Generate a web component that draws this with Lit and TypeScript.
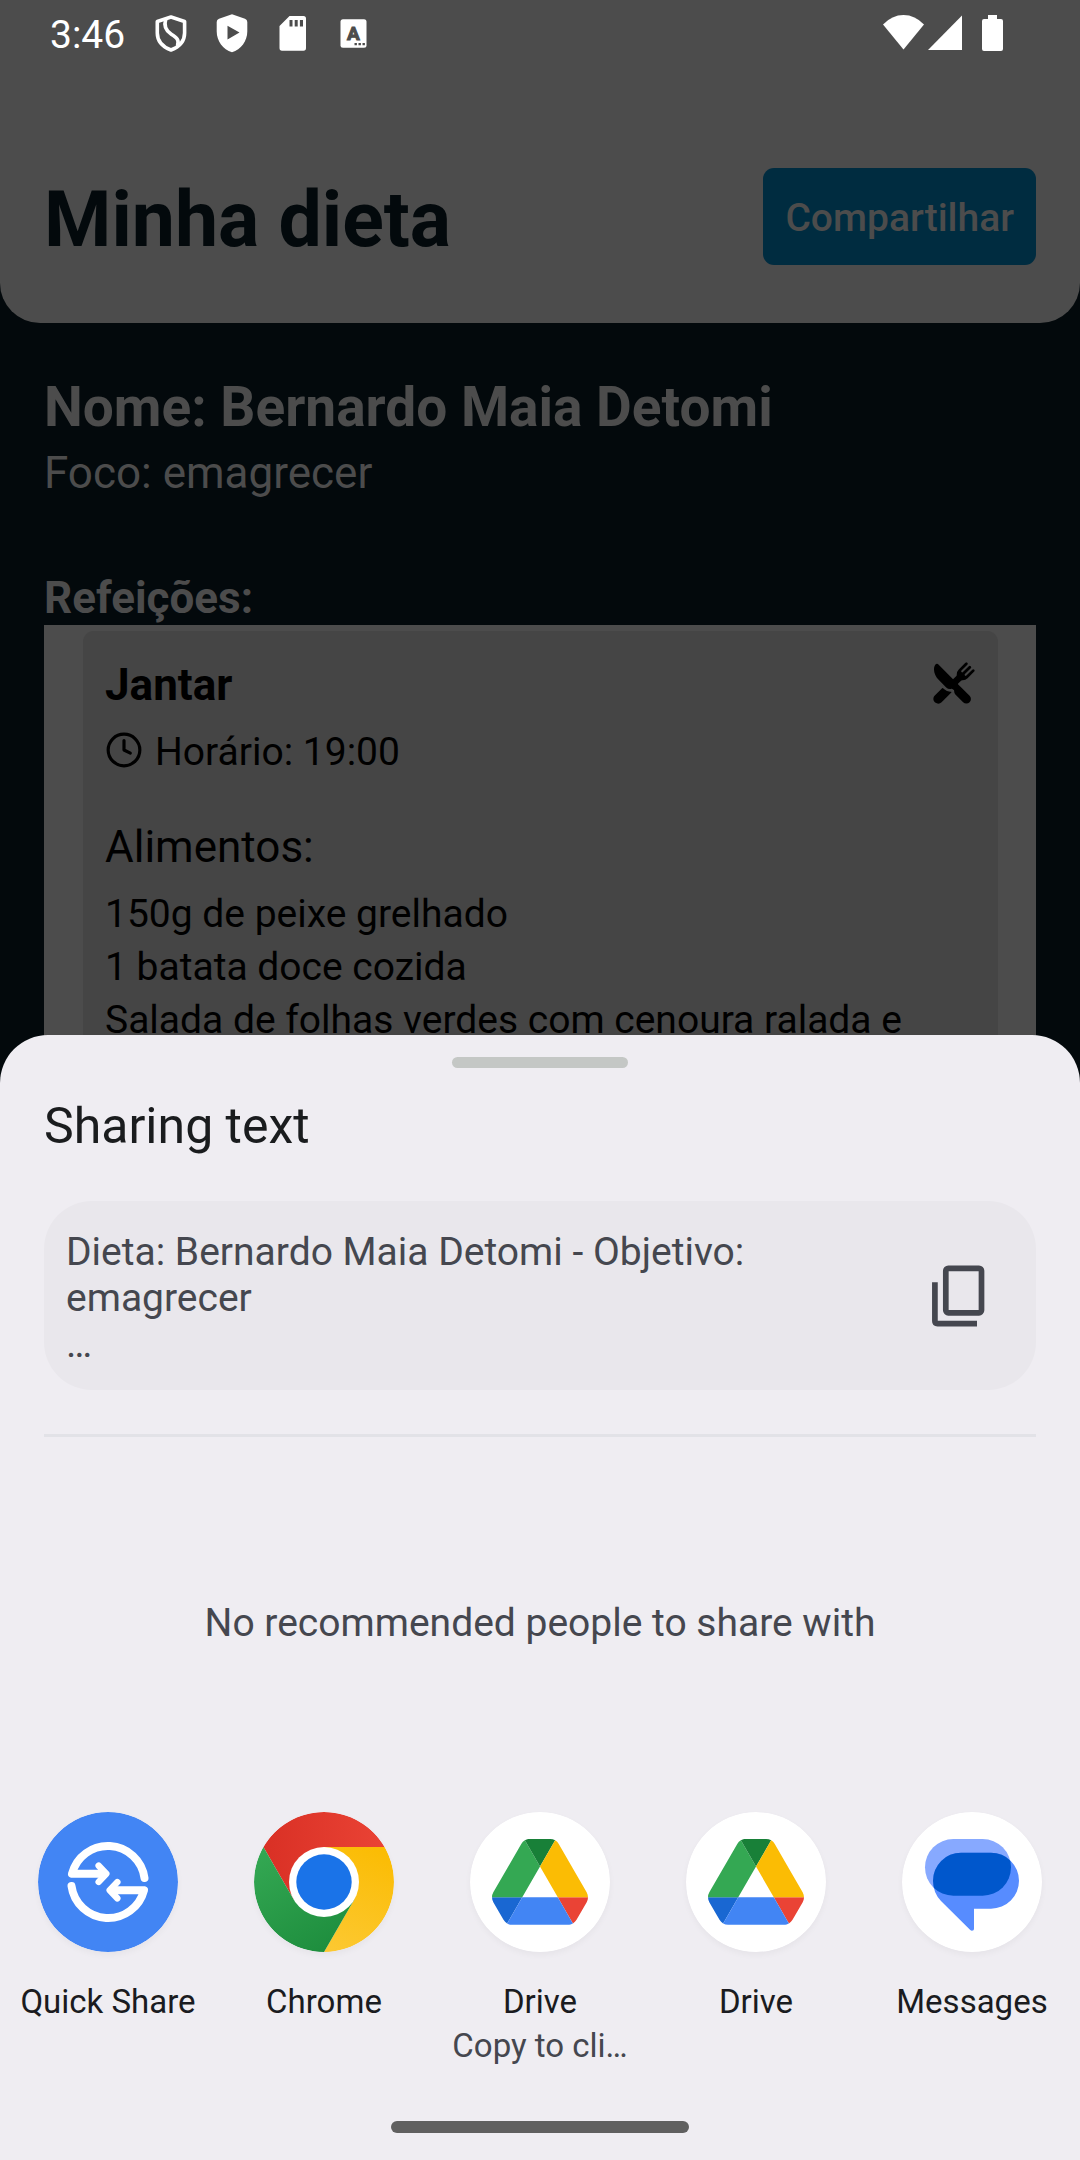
import { LitElement, html, css, svg, nothing } from "lit";
import { customElement } from "lit/decorators.js";

type AppIcon = "quick-share" | "chrome" | "drive" | "messages";

interface ShareTarget {
  icon: AppIcon;
  label: string;
  detail?: string;
}

const targets: ShareTarget[] = [
  { icon: "quick-share", label: "Quick Share" },
  { icon: "chrome", label: "Chrome" },
  { icon: "drive", label: "Drive", detail: "Copy to cli…" },
  { icon: "drive", label: "Drive" },
  { icon: "messages", label: "Messages" },
];

const foods = [
  "150g de peixe grelhado",
  "1 batata doce cozida",
  "Salada de folhas verdes com cenoura ralada e",
];

const artwork = {
  "quick-share": svg`
    <circle cx="70" cy="70" r="70" fill="#4285f4"/>
    <g fill="none" stroke="#fff" stroke-width="8" stroke-linecap="round" stroke-linejoin="round">
      <g>
        <path d="M106.5 66A37 37 0 0 0 34 61.8H66"/>
        <path d="M60.7 53.7l7.6 8.1-7.6 8.1" stroke-width="6.5"/>
      </g>
      <g transform="rotate(180 70 70)">
        <path d="M106.5 66A37 37 0 0 0 34 61.8H66"/>
        <path d="M60.7 53.7l7.6 8.1-7.6 8.1" stroke-width="6.5"/>
      </g>
    </g>`,
  chrome: svg`
    <defs>
      <linearGradient id="red" x1="9" y1="50" x2="131" y2="50" gradientUnits="userSpaceOnUse">
        <stop offset="0" stop-color="#d93025"/><stop offset="1" stop-color="#ea4335"/>
      </linearGradient>
      <linearGradient id="yellow" x1="60" y1="138" x2="105" y2="30" gradientUnits="userSpaceOnUse">
        <stop offset="0" stop-color="#fcc934"/><stop offset="1" stop-color="#fbbc04"/>
      </linearGradient>
      <linearGradient id="green" x1="80" y1="132" x2="20" y2="30" gradientUnits="userSpaceOnUse">
        <stop offset="0" stop-color="#1e8e3e"/><stop offset="1" stop-color="#34a853"/>
      </linearGradient>
    </defs>
    <path fill="url(#red)" d="M9.4 35A70 70 0 0 1 130.6 35H70V70L39.7 87.5Z"/>
    <path fill="url(#yellow)" d="M130.6 35A70 70 0 0 1 70 140L100.3 87.5L70 70V35Z"/>
    <path fill="url(#green)" d="M70 140A70 70 0 0 1 9.4 35L39.7 87.5L70 70L100.3 87.5Z"/>
    <circle cx="70" cy="70" r="35" fill="#fff"/>
    <circle cx="70" cy="70" r="27.7" fill="#1a73e8"/>`,
  drive: svg`
    <circle cx="70" cy="70" r="70" fill="#fff"/>
    <g transform="translate(22 27) scale(1.1)">
      <path fill="#1967d2" d="m6.6 66.85 3.85 6.65c.8 1.4 1.95 2.5 3.3 3.3l13.75-23.8h-27.5c0 1.55.4 3.1 1.2 4.5z"/>
      <path fill="#34a853" d="m43.65 25-13.75-23.8c-1.35.8-2.5 1.9-3.3 3.3l-25.4 44a9.06 9.06 0 0 0-1.2 4.5h27.5z"/>
      <path fill="#ea4335" d="m73.55 76.8c1.35-.8 2.5-1.9 3.3-3.3l1.6-2.75 7.65-13.25c.8-1.4 1.2-2.95 1.2-4.5h-27.5z"/>
      <path fill="#188038" d="m43.65 25 13.75-23.8c-1.35-.8-2.9-1.2-4.5-1.2h-18.5c-1.6 0-3.15.45-4.5 1.2z"/>
      <path fill="#4285f4" d="m59.8 53h-32.3l-13.75 23.8c1.35.8 2.9 1.2 4.5 1.2h50.8c1.6 0 3.15-.45 4.5-1.2z"/>
      <path fill="#fbbc04" d="m73.4 26.5-12.7-22c-.8-1.4-1.95-2.5-3.3-3.3l-13.75 23.8 16.15 28h27.45c0-1.55-.4-3.1-1.2-4.5z"/>
    </g>`,
  messages: svg`
    <defs><clipPath id="pill"><rect x="23" y="27" width="86" height="56.7" rx="28.35"/></clipPath></defs>
    <circle cx="70" cy="70" r="70" fill="#fff"/>
    <rect x="23" y="27" width="86" height="56.7" rx="28.35" fill="#87a9ff"/>
    <path fill="#578cff" d="M59 40.7H89A28 28 0 0 1 89 96.7H72V117Q72 118.7 70 118.7Q69 118.7 68 117.8L39 89Q31 80.5 31 68.7A28 28 0 0 1 59 40.7Z"/>
    <rect x="31" y="40.7" width="86" height="56" rx="28" fill="#0057cc" clip-path="url(#pill)"/>`,
};

@customElement("status-bar")
class StatusBar extends LitElement {
  static styles = css`
    :host { display: block; }
    .bar { display: flex; align-items: center; height: 70px; padding: 0 77px 0 50px; }
    .clock { font-size: 39px; line-height: 46px; color: #fff; }
    .notes { display: flex; gap: 17px; margin-left: 24px; }
    .system { display: flex; margin-left: auto; }
    .battery { margin-left: 20px; }
    .signal { margin-left: 4px; }
    svg { display: block; height: 44px; }
    .letter { font: 700 19px Roboto, sans-serif; }
  `;

  render() {
    return html`
      <div class="bar">
        <span class="clock">3:46</span>
        <div class="notes">
          <svg width="44" viewBox="0 0 44 44" fill="none" stroke="#fff" stroke-width="3.6" stroke-linejoin="round" aria-hidden="true">
            <path d="M22 4L35.6 8.5V20C35.6 28 30 34 22 37C14 34 8.3 28 8.3 20V8.500Z"/>
            <path d="M16.8 6C14.5 13 16.5 17.500 22.300 21.300C28 25 30.500 27 28.500 33"/>
          </svg>
          <svg width="44" viewBox="0 0 44 44" fill="#fff" fill-rule="evenodd" aria-hidden="true">
            <path d="M22 1.3L35 5.8Q37.3 6.6 37.3 9V18.5C37.3 28 31 36.5 22 39.3C13 36.5 6.7 28 6.7 18.5V9Q6.7 6.6 9 5.8ZM17.5 12.8V26.5L29.5 19.6Z"/>
          </svg>
          <svg width="44" viewBox="0 0 44 44" fill="#fff" fill-rule="evenodd" aria-hidden="true">
            <path d="M18.5 3H32.5Q35 3 35 5.500V35Q35 37.7 32.5 37.7H11Q8.5 37.7 8.5 35V13ZM18.5 7V13.5H21.5V7ZM23.7 7V13.5H26.7V7ZM28.9 7V13.5H32V7Z"/>
          </svg>
          <svg width="44" viewBox="0 0 44 44" aria-hidden="true">
            <rect x="8.5" y="6.3" width="26" height="28.5" rx="2.5" fill="#fff"/>
            <text class="letter" x="21.5" y="27" text-anchor="middle" fill="#4c4c4c" stroke="#4c4c4c">A</text>
            <path fill="#4c4c4c" d="M22.5 30h2.4v2.3h-2.4zM26.5 30h2.4v2.3h-2.4zM30.5 30h2.4v2.3h-2.4z"/>
          </svg>
        </div>
        <div class="system">
          <svg width="41" viewBox="0 0 41 44" fill="#fff" aria-hidden="true"><path d="M20.5 36.5L0 11.5Q9 2 20.5 2Q32 2 41 11.5Z"/></svg>
          <svg class="signal" width="34" viewBox="0 0 34 44" fill="#fff" aria-hidden="true"><path d="M0 37L34 2.5V37Z"/></svg>
          <svg class="battery" width="21" viewBox="0 0 21 44" fill="#fff" aria-hidden="true"><path d="M6 2H15V6H19Q21 6 21 8V36Q21 38 19 38H2Q0 38 0 36V8Q0 6 2 6H6Z"/></svg>
        </div>
      </div>`;
  }
}

@customElement("diet-screen")
class DietScreen extends LitElement {
  static styles = css`
    :host { display: block; background: #03090c; }
    h1, h2, h3, h4, p, ul { margin: 0; padding: 0; font-weight: 400; }
    .header { background: #4c4c4c; border-radius: 0 0 40px 40px; }
    .title-row { display: flex; justify-content: space-between; align-items: flex-end; padding: 98px 44px 58px; }
    .title { font-size: 77px; line-height: 90px; font-weight: 700; color: #03090c; }
    .share { font: 500 39px/45px Roboto, sans-serif; padding: 28px 22px 24px; border: 0; border-radius: 11px; background: #002c40; color: #4c4c4c; }
    .content { padding: 52px 44px 0; color: #4c4c4c; }
    .name { font-size: 55px; line-height: 64px; font-weight: 700; }
    .focus { font-size: 44px; line-height: 54px; margin-top: 7px; }
    .section { font-size: 44px; line-height: 54px; font-weight: 700; margin-top: 71px; }
    .list { background: #4c4c4c; padding: 6px 38px 0 39px; color: #000; }
    .card { background: #454545; border-radius: 11px 11px 0 0; padding: 29px 22px 0; }
    .meal { display: flex; justify-content: space-between; align-items: flex-start; }
    .meal-name { font-size: 44px; line-height: 50px; font-weight: 700; }
    .time { display: flex; align-items: flex-start; gap: 12px; margin-top: 21px; font-size: 39px; line-height: 42px; }
    .foods-title { font-size: 44px; line-height: 54px; margin-top: 47px; }
    .foods { list-style: none; margin-top: 14px; font-size: 39px; line-height: 53px; }
    svg { display: block; flex: none; }
  `;

  render() {
    return html`
      <header class="header">
        <status-bar></status-bar>
        <div class="title-row">
          <h1 class="title">Minha dieta</h1>
          <button class="share" type="button">Compartilhar</button>
        </div>
      </header>
      <main class="content">
        <h2 class="name">Nome: Bernardo Maia Detomi</h2>
        <p class="focus">Foco: emagrecer</p>
        <h2 class="section">Refeições:</h2>
        <div class="list">
          <article class="card">
            <div class="meal">
              <h3 class="meal-name">Jantar</h3>
              <svg width="44" height="46" viewBox="0 0 512 512" aria-hidden="true">
                <path d="M357.57 223.94a79.48 79.48 0 0056.58-23.44l77-76.95c6.09-6.09 6.65-16 .85-22.39a16 16 0 00-23.17-.56l-68.63 68.58a12.29 12.29 0 01-17.37 0c-4.79-4.78-4.53-12.86.25-17.64l68.33-68.33a16 16 0 00-.56-23.16A15.62 15.62 0 00440.27 56a16.71 16.71 0 00-11.81 4.9l-68.27 68.26a12.29 12.29 0 01-17.37 0c-4.78-4.78-4.53-12.86.25-17.64l68.33-68.31a16 16 0 00-.56-23.16A15.62 15.62 0 00400.26 16a16.73 16.73 0 00-11.81 4.9L311.5 97.85a79.49 79.49 0 00-23.44 56.59v8.23a16 16 0 01-4.69 11.33l-35.61 35.62a4 4 0 01-5.66 0L68.82 36.33a16 16 0 00-22.58-.06C31.09 51.28 23 72.47 23 97.54c-.1 41.4 21.66 89 56.79 124.08l85.45 85.45A64.79 64.79 0 00211 326a64 64 0 0016.21-2.08 16.24 16.24 0 014.07-.53 15.93 15.93 0 0110.83 4.25l11.39 10.52a16.12 16.12 0 014.6 11.23v5.54a47.73 47.73 0 0013.77 33.65l90.05 91.57.09.1a53.29 53.29 0 0075.36-75.37L302.39 269.9a4 4 0 010-5.66L338 228.63a16 16 0 0111.32-4.69z"/>
                <path d="M211 358a97.32 97.32 0 01-68.36-28.25l-13.86-13.86a8 8 0 00-11.3 0l-85 84.56c-15.15 15.15-20.56 37.45-13.06 59.29a30.63 30.63 0 001.49 3.6C31 484 50.58 496 72 496a55.68 55.68 0 0039.64-16.44L225 365.66a4.69 4.69 0 001.32-3.72v-.26a4.63 4.63 0 00-5.15-4.27A97.09 97.09 0 01211 358z"/>
              </svg>
            </div>
            <p class="time">
              <svg width="38" height="38" viewBox="0 0 24 24" fill="none" stroke="#000" stroke-width="2" stroke-linecap="round" stroke-linejoin="round" aria-hidden="true">
                <circle cx="12" cy="12" r="10"/><path d="M12 6v6l4 2"/>
              </svg>
              <span>Horário: 19:00</span>
            </p>
            <h4 class="foods-title">Alimentos:</h4>
            <ul class="foods">${foods.map((food) => html`<li>${food}</li>`)}</ul>
          </article>
        </div>
      </main>`;
  }
}

@customElement("share-target")
class ShareTargetItem extends LitElement {
  static properties = { target: { attribute: false } };
  declare target: ShareTarget;

  static styles = css`
    :host { display: block; min-width: 0; }
    .target { display: flex; flex-direction: column; align-items: center; width: 100%; margin: 0; padding: 0; border: 0; background: none; font: 400 33px/44px Roboto, sans-serif; color: #1a1b20; }
    .icon { display: block; width: 140px; height: 140px; margin-bottom: 28px; border-radius: 50%; box-shadow: 0 3px 6px rgba(0, 0, 0, 0.04); }
    .detail { color: #45474f; white-space: nowrap; }
    .label { white-space: nowrap; }
  `;

  render() {
    const { icon, label, detail } = this.target;
    return html`
      <button class="target" type="button">
        <svg class="icon" viewBox="0 0 140 140" aria-hidden="true">${artwork[icon]}</svg>
        <span class="label">${label}</span>
        ${detail ? html`<span class="detail">${detail}</span>` : nothing}
      </button>`;
  }
}

@customElement("share-sheet")
class ShareSheet extends LitElement {
  static styles = css`
    :host { display: block; background: #efedf2; border-radius: 48px 48px 0 0; padding-top: 22px; }
    .handle { width: 176px; height: 11px; margin: 0 auto; border-radius: 6px; background: #c4c7c5; }
    .title { margin: 28px 44px 0; font-size: 50px; line-height: 60px; font-weight: 400; color: #1a1c1e; }
    .preview { display: flex; align-items: center; justify-content: space-between; margin: 45px 44px 0; border-radius: 48px; background: #e9e7ec; padding-right: 45px; }
    .text { margin: 0; padding: 28px 22px 23px; font-size: 39px; line-height: 46px; color: #45474f; }
    .line { display: block; }
    .copy { display: block; flex: none; border: 0; padding: 0; background: none; }
    .copy-icon { display: block; }
    .divider { height: 3px; margin: 44px 44px 0; border: 0; background: #e2e2e7; }
    .empty { margin: 0; padding: 163px 44px 166px; text-align: center; font-size: 39px; line-height: 46px; color: #45474f; }
    .targets { display: grid; grid-template-columns: repeat(5, minmax(0, 1fr)); }
    .gesture { width: 298px; height: 12px; margin: 53px auto 27px; border-radius: 6px; background: #606060; }
  `;

  render() {
    return html`
      <div class="handle"></div>
      <h2 class="title">Sharing text</h2>
      <div class="preview">
        <p class="text">
          <span class="line">Dieta: Bernardo Maia Detomi - Objetivo:</span>
          <span class="line">emagrecer</span>
          <span class="line">…</span>
        </p>
        <button class="copy" type="button" aria-label="Copy text">
          <svg class="copy-icon" width="60" height="62" viewBox="0 0 60 62" fill="none" stroke="#45474f" stroke-width="5.7" aria-hidden="true">
            <rect x="14.8" y="3.3" width="35.7" height="44.5" rx="2.5"/>
            <path d="M3.9 17.2V56Q3.9 58.6 6.5 58.6H46"/>
          </svg>
        </button>
      </div>
      <hr class="divider">
      <p class="empty">No recommended people to share with</p>
      <div class="targets">
        ${targets.map((target) => html`<share-target .target=${target}></share-target>`)}
      </div>
      <div class="gesture"></div>`;
  }
}

@customElement("app-root")
class AppRoot extends LitElement {
  static styles = css`
    :host { display: grid; min-height: 100vh; font-family: Roboto, sans-serif; }
    .screen, .sheet { grid-area: 1 / 1; min-width: 0; }
    .sheet { align-self: end; }
  `;

  render() {
    return html`
      <diet-screen class="screen"></diet-screen>
      <share-sheet class="sheet"></share-sheet>`;
  }
}
